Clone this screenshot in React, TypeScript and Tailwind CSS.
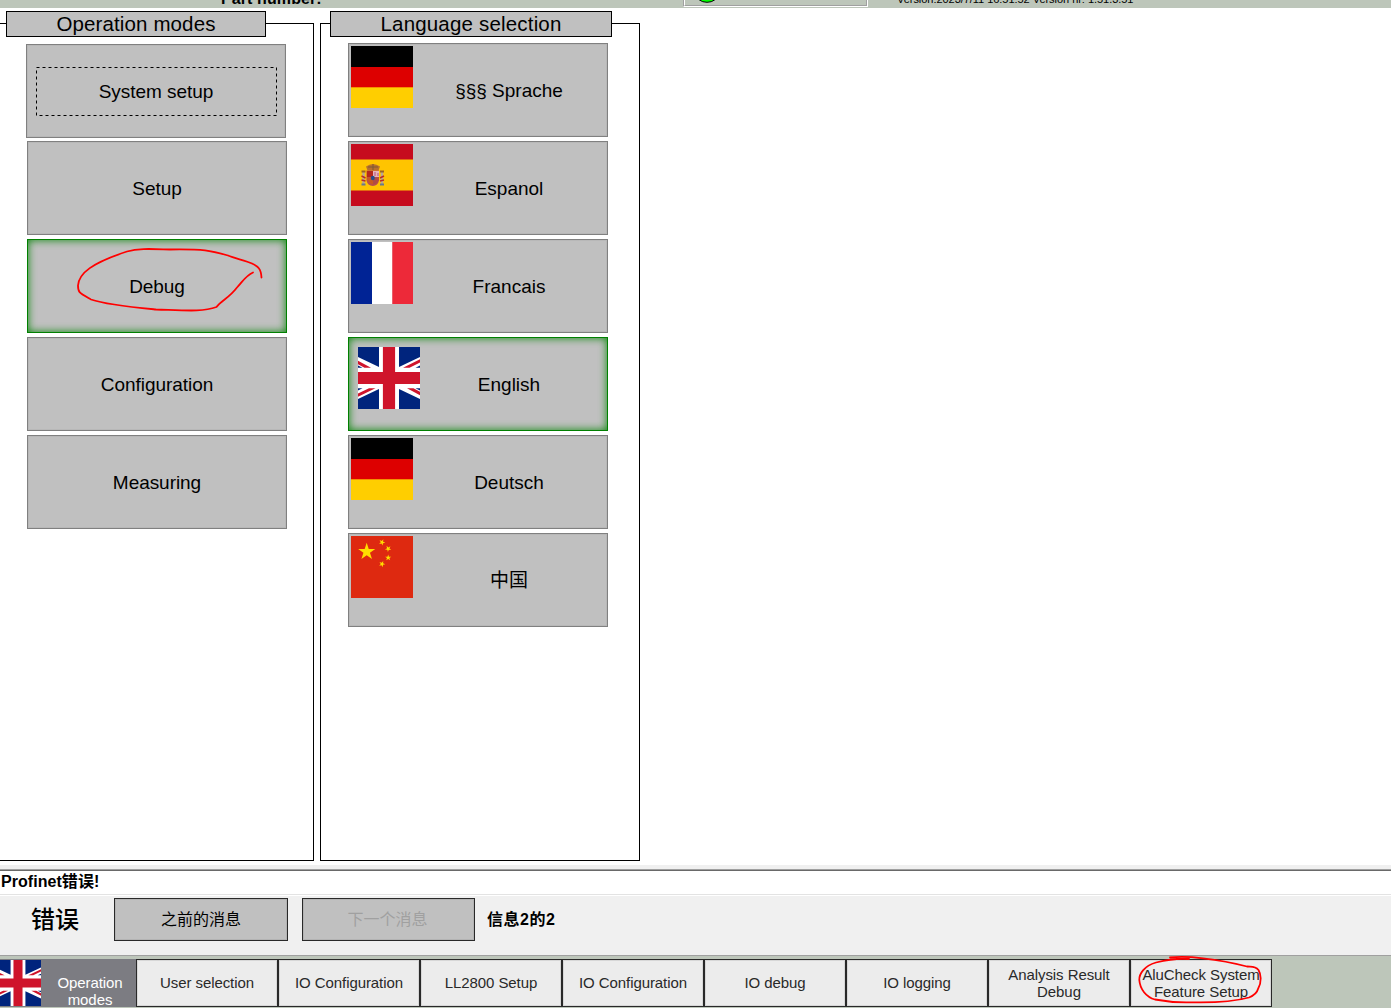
import type { ReactNode } from "react";

const GermanFlag = () => (
  <svg viewBox="0 0 62 62" className="block h-[62px] w-[62px]">
    <rect width="62" height="21" fill="#000" />
    <rect y="21" width="62" height="21" fill="#d00" />
    <rect y="41.3" width="62" height="20.7" fill="#ffce00" />
  </svg>
);

const SpanishFlag = () => (
  <svg viewBox="0 0 62 62" className="block h-[62px] w-[62px]">
    <rect width="62" height="62" fill="#c60b1e" />
    <rect y="15.5" width="62" height="31" fill="#ffc400" />
    <g>
      <path d="M15 22.5q7-5 14 0l-1.5 4h-11z" fill="#b8702c" />
      <path d="M17 23h10M22 20v6" stroke="#7c5a35" strokeWidth="1" />
      <path d="M15.500 26.500h12.500v10q-1 5-6.200 5.500q-5.300-.5-6.300-5.500z" fill="#b9504a" />
      <rect x="16" y="27" width="6" height="6" fill="#b5281c" />
      <rect x="22" y="27" width="6" height="6" fill="#e5b5bb" />
      <path d="M24 28v4M27 29v3" stroke="#b9557c" strokeWidth="1" />
      <path d="M16 33.500h6v7q-5-1-6-7z" fill="#c95b20" />
      <path d="M22 33.500h6q0 6-6 7z" fill="#b04d43" />
      <ellipse cx="21.800" cy="34" rx="2" ry="2.300" fill="#294c8b" />
      <path d="M12.500 28v12M31 28v12" stroke="#b8a795" strokeWidth="2.400" />
      <path d="M10.500 32l4 2M10.500 36l4 1M29 34l4-2M29 37l4-1" stroke="#b92b27" strokeWidth="1.500" />
      <path d="M10.500 27.500h4M29 27.500h4" stroke="#9a6428" strokeWidth="2" />
      <path d="M10.500 40.500h4M29 40.500h4" stroke="#68798b" strokeWidth="2" />
    </g>
  </svg>
);

const FrenchFlag = () => (
  <svg viewBox="0 0 62 62" className="block h-[62px] w-[62px]">
    <rect width="21" height="62" fill="#002395" />
    <rect x="21" width="20.500" height="62" fill="#fff" />
    <rect x="41.300" width="20.700" height="62" fill="#ed2939" />
  </svg>
);

const BritishFlag = ({ className }: { className: string }) => (
  <svg viewBox="0 0 62 62" className={className}>
    <rect width="62" height="62" fill="#fff" />
    <path
      d="M0 0H21V20L0 10ZM41 0H62V10L41 20ZM0 62H21V42L0 52ZM41 62H62V52L41 42ZM0 18.500L4.500 20.700H0ZM62 18.500L57.500 20.700H62ZM0 43.500L4.500 41.300H0ZM62 43.500L57.500 41.300H62Z"
      fill="#00247d"
    />
    <path d="M0 13.800L13 20.700H6.500L0 17.300ZM62 12.300L45 20.700H51.500L62 15.600ZM0 49.700L17.500 41.300H11L0 46.500ZM62 48.300L49 41.300H55.500L62 44.700Z" fill="#cf142b" />
    <path d="M31 0v62M0 31h62" stroke="#cf142b" strokeWidth="12.200" />
  </svg>
);

const STAR = "M0-1L.225-.309H.951L.363.118L.588.809L0 .382L-.588.809L-.363.118L-.951-.309H-.225Z";

const ChineseFlag = () => (
  <svg viewBox="0 0 62 62" className="block h-[62px] w-[62px]">
    <rect width="62" height="62" fill="#de2910" />
    <g fill="#ffde00">
      <path d={STAR} transform="translate(15.700 15.800) scale(9)" />
      <path d={STAR} transform="translate(31 6.300) rotate(24) scale(3.300)" />
      <path d={STAR} transform="translate(37.200 12.700) rotate(42) scale(3.300)" />
      <path d={STAR} transform="translate(37.200 21.700) scale(3.300)" />
      <path d={STAR} transform="translate(31 28) rotate(22) scale(3.300)" />
    </g>
  </svg>
);

const idle = "border-[#808080] shadow-[inset_0_0_0_1px_#b8b8b8]";
const selected = "border-[#008000] shadow-[inset_0_0_8px_0px_#0a860a]";

function ModeButton({ label, active, children }: { label: string; active?: boolean; children?: ReactNode }) {
  return (
    <button className={`relative flex h-[94px] w-[260px] shrink-0 items-center justify-center border bg-[#c0c0c0] pt-[2px] text-[19px] leading-[22px] ${active ? selected : idle}`}>
      <span className="tracking-[-0.050px]">{label}</span>
      {children}
    </button>
  );
}

function LanguageButton({ label, flag, active }: { label: string; flag: ReactNode; active?: boolean }) {
  return (
    <button className={`flex h-[94px] w-[260px] shrink-0 items-start border bg-[#c0c0c0] text-[19px] leading-[22px] ${active ? selected : idle} ${active ? "pt-[9px] pl-[9px]" : "pt-[2px] pl-[2px]"}`}>
      {flag}
      <span className={`w-[192px] text-center ${active ? "mt-[27px] -ml-[7px]" : "mt-[34px]"}`}>{label}</span>
    </button>
  );
}

const tabs = ["User selection", "IO Configuration", "LL2800 Setup", "IO Configuration", "IO debug", "IO logging", "Analysis Result\nDebug", "AluCheck System\nFeature Setup"];

export default function App() {
  return (
    <div className="flex h-[1008px] w-[1391px] flex-col overflow-hidden bg-white font-['Liberation_Sans','Noto_Sans_CJK_SC',sans-serif] text-black">
      <header className="flex h-2 shrink-0 items-end overflow-hidden bg-[#bdc6ba]">
        <div className="ml-[221px] w-[462px] pb-[1px] text-[16px] leading-[16px] font-bold tracking-[0.100px] whitespace-nowrap">Part number:</div>
        <div className="mb-[1px] h-[7px] w-[185px] overflow-hidden border-r border-b border-l border-r-white border-b-white border-l-[#a0a0a0]">
          <div className="h-[6px] border-r border-b border-l border-r-[#a0a0a0] border-b-[#a0a0a0] border-l-white">
            <svg viewBox="0 0 30 6" className="ml-[7px] block h-[5px] w-[30px]" preserveAspectRatio="xMidYMin slice">
              <ellipse cx="15" cy="-6" rx="11" ry="8.300" fill="#0f0" stroke="#000" />
            </svg>
          </div>
        </div>
        <span className="mb-[2px] ml-[29px] text-[11px] leading-[13px] tracking-[-0.040px] whitespace-nowrap">Version:2023/7/11 16:51:52 Version nr: 1.51.3.51</span>
      </header>

      <main className="flex h-[857px] shrink-0 gap-[6px] pt-[3px]">
        <section className="flex w-[314px] flex-col">
          <div className="z-10 ml-[6px] flex h-[26px] w-[260px] shrink-0 items-center justify-center border border-black bg-[#c0c0c0] text-[20.500px] leading-[24px] tracking-[0.120px]">Operation modes</div>
          <div className="-mt-[14px] flex h-[838px] flex-col gap-1 border-t border-r border-b border-black pt-[20px] pl-[27px]">
            <div className="-mb-[1px] -ml-[1px]">
              <ModeButton label="System setup">
                <svg className="absolute top-[22px] left-[9px] h-[49px] w-[241px]" viewBox="0 0 241 49">
                  <rect x=".5" y=".5" width="240" height="48" fill="none" stroke="#000" strokeDasharray="3 3" />
                </svg>
              </ModeButton>
            </div>
            <ModeButton label="Setup" />
            <ModeButton label="Debug" active>
              <svg className="pointer-events-none absolute -top-px -left-px h-[94px] w-[260px]" viewBox="0 0 260 94" fill="none" stroke="#f00" strokeWidth="1.800" strokeLinecap="round" strokeLinejoin="round">
                <path d="M226 33.500C219 36.500 216 42 210 48.500C202 59 194 62 189.500 68C176 73 160 71.500 129 70.500C108 68.500 80 66 64 60.500C52 53.500 51 53.500 51 46.500C52 34 65 24 100 12.500C112 9 125 10 143 10.500C177 10 183 11.500 201 16.500C208 19.500 219 21.500 225 24.500C231 27.500 234 29.500 234.500 38.500" />
              </svg>
            </ModeButton>
            <ModeButton label="Configuration" />
            <ModeButton label="Measuring" />
          </div>
        </section>

        <section className="flex w-[320px] flex-col">
          <div className="z-10 ml-[10px] flex h-[26px] w-[282px] shrink-0 items-center justify-center border border-black bg-[#c0c0c0] text-[20.500px] leading-[24px] tracking-[0.180px]">Language selection</div>
          <div className="-mt-[14px] flex h-[838px] flex-col gap-1 border border-black pt-[19px] pl-[27px]">
            <LanguageButton label="§§§ Sprache" flag={<GermanFlag />} />
            <LanguageButton label="Espanol" flag={<SpanishFlag />} />
            <LanguageButton label="Francais" flag={<FrenchFlag />} />
            <LanguageButton label="English" active flag={<BritishFlag className="block h-[62px] w-[62px] shrink-0" />} />
            <LanguageButton label="Deutsch" flag={<GermanFlag />} />
            <LanguageButton label="中国" flag={<ChineseFlag />} />
          </div>
        </section>
      </main>

      <section className="flex h-[91px] shrink-0 flex-col border-b border-[#a0a0a0] bg-[#f0f0f0] pt-1">
        <div className="h-[27px] shrink-0 border-t border-[#a0a0a0] bg-white">
          <div className="h-[25px] border-t border-b border-t-[#696969] border-b-[#e3e3e3] pl-[1px] text-[16px] leading-[22px] font-bold tracking-[0.050px]">Profinet错误!</div>
        </div>
        <div className="flex items-center pt-[2px]">
          <span className="w-[114px] pl-[31px] text-[24px] leading-[43px] font-medium">错误</span>
          <button className="h-[43px] w-[174px] border border-[#292929] bg-[#c0c0c0] text-[16px] shadow-[inset_0_0_0_1px_#b3b3b3]">之前的消息</button>
          <button disabled className="ml-[14px] h-[43px] w-[173px] border border-[#292929] bg-[#c0c0c0] pr-[2px] text-[16px] text-[#a0a0a0] shadow-[inset_0_0_0_1px_#b3b3b3]">下一个消息</button>
          <span className="ml-[12px] text-[16px] font-bold tracking-[0.500px]">信息2的2</span>
        </div>
      </section>

      <nav className="flex h-[52px] shrink-0 bg-[#bdc6ba] pt-[3px]">
        <button className="flex h-[48px] w-[136px] items-start bg-[#7c7c82] text-[15px] leading-[17px] text-white">
          <BritishFlag className="mt-[1px] -ml-[5px] block h-[46px] w-[46px] shrink-0" />
          <span className="ml-[4px] flex h-[49px] w-[90px] shrink-0 items-end justify-center overflow-hidden tracking-[-0.080px] whitespace-pre-line">{"Operation\nmodes"}</span>
        </button>
        {tabs.map((label, i) => (
          <button key={i} className="relative flex h-[48px] w-[142px] items-center justify-center border border-[#292929] bg-[#ececec] text-[15px] leading-[17px] text-[#292929] shadow-[inset_0_0_0_1px_#d7d7d7]">
            <span className={`tracking-[-0.080px] whitespace-pre-line ${i < 6 ? "-mt-[1px]" : ""}`}>{label}</span>
            {i === 7 && (
              <svg className="pointer-events-none absolute -top-[5px] left-[5px] h-[52px] w-[132px]" viewBox="0 0 132 52" fill="none" stroke="#f00" strokeWidth="1.800" strokeLinecap="round" strokeLinejoin="round">
                <path d="M53 4C42 3 30 5 20 7.500C8 11 3 19 3.300 25C4 34 10 42 19 44.500C32 47 44 47.500 54 47.300C80 48 100 46 113 42.500C119 40 121 38 122 34C126 27 125 19 122.500 15C119 11 116 12 111 11.500C98 8 82 5 67 3.300C52 1.500 43 1.500 34 2.500" />
              </svg>
            )}
          </button>
        ))}
      </nav>
    </div>
  );
}
